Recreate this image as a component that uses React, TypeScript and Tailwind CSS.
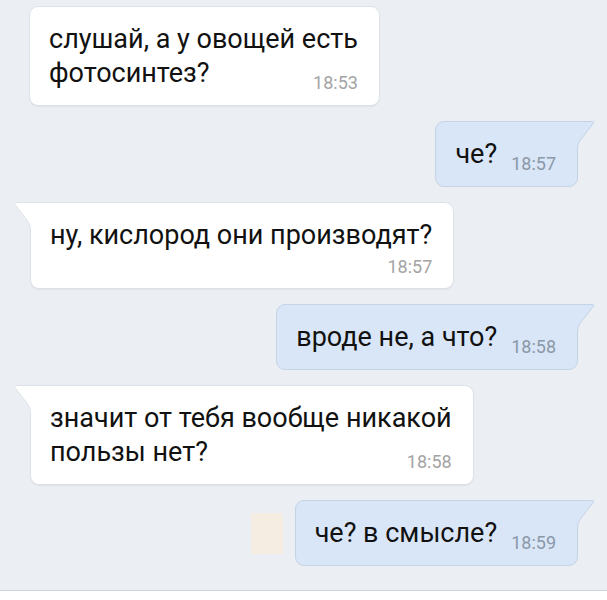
import React from "react";

type Msg = {
  side: "in" | "out";
  lines: string[];
  time: string;
  tail: boolean;
  timeOwnLine?: boolean;
  sticker?: boolean;
};

const msgs: Msg[] = [
  { side: "in", lines: ["слушай, а у овощей есть", "фотосинтез?"], time: "18:53", tail: false },
  { side: "out", lines: ["че?"], time: "18:57", tail: true },
  { side: "in", lines: ["ну, кислород они производят?"], time: "18:57", tail: true, timeOwnLine: true },
  { side: "out", lines: ["вроде не, а что?"], time: "18:58", tail: true },
  { side: "in", lines: ["значит от тебя вообще никакой", "пользы нет?"], time: "18:58", tail: true },
  { side: "out", lines: ["че? в смысле?"], time: "18:59", tail: true, sticker: true },
];

function Tail({ side }: { side: "in" | "out" }) {
  const fill = side === "out" ? "#d9e6f7" : "#ffffff";
  const stroke = side === "out" ? "#c4d3e5" : "#dde2e8";
  return (
    <svg
      width="18"
      height="28"
      viewBox="0 0 18 28"
      className={
        side === "out"
          ? "absolute left-full top-[-1px]"
          : "absolute right-full top-[-1px] -scale-x-100"
      }
    >
      <path d="M0 0 H15.5 Q18.2 0 16.4 2.4 L3.2 19.6 Q0.5 23 0.5 28 H0 Z" fill={fill} />
      <path
        d="M0 0.5 H15.5 Q17.6 0.5 16 2.6 L2.9 19.6 Q0.5 23 0.5 28"
        fill="none"
        stroke={stroke}
        strokeWidth="1"
      />
    </svg>
  );
}

function Bubble({ m }: { m: Msg }) {
  const out = m.side === "out";
  const timeCls = out ? "text-[#8b98a7]" : "text-[#a4a4a4]";
  const last = m.lines[m.lines.length - 1];
  const rest = m.lines.slice(0, -1);
  return (
    <div
      className={
        "relative border pl-[19px] pr-[21px] py-[15px] text-[#111]" +
        " " +
        (out
          ? "bg-[#d9e6f7] border-[#c4d3e5] rounded-[9px] rounded-tr-none"
          : "bg-white border-[#dde2e8] rounded-[9px] shadow-[0_1px_1px_rgba(0,0,0,0.05)] " +
            (m.tail ? "rounded-tl-none" : ""))
      }
    >
      {m.tail && <Tail side={m.side} />}
      {rest.map((l, i) => (
        <div key={i} className="text-[27px] leading-[34px] whitespace-nowrap">
          {l}
        </div>
      ))}
      {m.timeOwnLine ? (
        <>
          <div className="text-[27px] leading-[34px] whitespace-nowrap">{last}</div>
          <div className={"text-right text-[18px] leading-[21px] mt-[4px] mb-[-4px] " + timeCls}>{m.time}</div>
        </>
      ) : (
        <div className="flex items-end">
          <div className="text-[27px] leading-[34px] whitespace-nowrap">{last}</div>
          <div className={"ml-auto pl-[14px] text-[18px] leading-[20px] mb-[-3px] whitespace-nowrap " + timeCls}>
            {m.time}
          </div>
        </div>
      )}
    </div>
  );
}

export default function App() {
  return (
    <div
      className="w-[607px] h-[600px] bg-[#ebeff4] flex flex-col overflow-hidden"
      style={{ fontFamily: "Roboto, 'Noto Sans', sans-serif" }}
    >
      <div className="flex-1 flex flex-col gap-[15px] pt-[6px] pl-[30px] pr-[29px]">
        {msgs.map((m, i) =>
          m.side === "out" ? (
            <div key={i} className="self-end flex items-center gap-[12px]">
              {m.sticker && <div className="w-[32px] h-[41px] bg-[#f5ece2]" />}
              <Bubble m={m} />
            </div>
          ) : (
            <div key={i} className={"self-start " + (i === 0 ? "-ml-[1px]" : "")}>
              <Bubble m={m} />
            </div>
          )
        )}
      </div>
      <div className="h-[10px] bg-white border-t border-[#cdd3db]" />
    </div>
  );
}
